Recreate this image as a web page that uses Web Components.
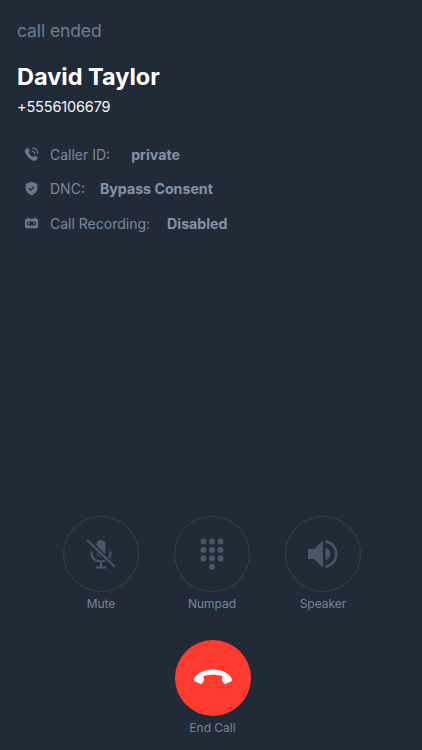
<!DOCTYPE html>
<html>
<head>
<meta charset="utf-8">
<title>Call</title>
<style>
  html, body { margin: 0; height: 100%; background: #212b38; }
  body { font-family: Inter, "Liberation Sans", sans-serif; }
</style>
</head>
<body>
<call-screen>
  <call-header slot="header" status="call ended" name="David Taylor" phone="+5556106679"></call-header>

  <call-info slot="info" label="Caller ID:" value="private" style="--value-gap: 21px">
    <svg viewBox="0 0 16 16" width="15" height="15"><path fill="currentColor" d="M1.200 3.100 3.300 1c.4-.4 1-.3 1.300.2l1.300 2.200c.2.400.2.800-.1 1.100L4.900 5.400c.7 2.400 2.600 4.400 5 5.300l.9-.9c.3-.3.800-.4 1.200-.1l2.200 1.300c.5.300.6 1 .2 1.400l-1.700 1.800c-.7.700-1.700.8-2.600.5C5.500 12.500 2.800 9.400 1 5.500.7 4.700.7 3.700 1.200 3.100Z"/><path fill="none" stroke="currentColor" stroke-width="1.300" stroke-linecap="round" d="M9 4.300c1.500.2 2.500 1.200 2.800 2.700M9.300 1.200c3 .2 5 2.300 5.400 5.300"/></svg>
  </call-info>
  <call-info slot="info" label="DNC:" value="Bypass Consent" style="--value-gap: 15px">
    <svg viewBox="0 0 16 16" width="15" height="15"><path fill="currentColor" d="M8 .8 14.200 3v4.500c0 3.700-2.600 6.400-6.200 7.700-3.600-1.300-6.200-4-6.200-7.700V3Z"/><path fill="none" stroke="#212b38" stroke-width="1.400" stroke-linecap="round" stroke-linejoin="round" d="m5.500 8 1.800 1.700 3.200-3.300"/></svg>
  </call-info>
  <call-info slot="info" label="Call Recording:" value="Disabled" style="--value-gap: 17px">
    <svg viewBox="0 0 16 16" width="15" height="15"><path fill="currentColor" fill-rule="evenodd" d="M2.500 3H4V1.500h1.500V3h5V1.500H12V3h1.500c.8 0 1.500.7 1.500 1.500v7c0 .8-.7 1.500-1.500 1.500h-11C1.700 13 1 12.300 1 11.500v-7C1 3.700 1.700 3 2.500 3ZM5 5.800a2.200 2.200 0 1 0 0 4.400h6a2.200 2.200 0 1 0 0-4.400Z"/><circle cx="5" cy="8" r="1.100" fill="currentColor"/><circle cx="11" cy="8" r="1.100" fill="currentColor"/></svg>
  </call-info>

  <call-button slot="controls" label="Mute">
    <svg viewBox="0 0 32 32" width="32" height="32">
      <rect x="11.500" y="2" width="9" height="17" rx="4.500" fill="currentColor"/>
      <path fill="none" stroke="currentColor" stroke-width="2" d="M6.500 13.500v1.500c0 5 4 8.500 9.500 8.500s9.500-3.500 9.500-8.500v-1.500M16 23.500V29M11 29.500h10"/>
      <path stroke="#212b38" stroke-width="5" d="M3 3 29 28"/>
      <path stroke="currentColor" stroke-width="2.200" stroke-linecap="round" d="M3 3 29 28"/>
    </svg>
  </call-button>
  <call-button slot="controls" label="Numpad">
    <svg viewBox="0 0 32 32" width="32" height="32" fill="currentColor">
      <circle cx="7.500" cy="3.500" r="2.900"/><circle cx="16" cy="3.500" r="2.900"/><circle cx="24.500" cy="3.500" r="2.900"/>
      <circle cx="7.500" cy="12" r="2.900"/><circle cx="16" cy="12" r="2.900"/><circle cx="24.500" cy="12" r="2.900"/>
      <circle cx="7.500" cy="20.500" r="2.900"/><circle cx="16" cy="20.500" r="2.900"/><circle cx="24.500" cy="20.500" r="2.900"/>
      <circle cx="16" cy="29" r="2.900"/>
    </svg>
  </call-button>
  <call-button slot="controls" label="Speaker">
    <svg viewBox="0 0 32 32" width="32" height="32" fill="currentColor">
      <path d="M1 11h6l9-8.500v27L7 21H1Z"/>
      <path d="M18.500 9.500c3.200 1.300 4.700 3.700 4.700 6.500s-1.500 5.200-4.700 6.500Z"/>
      <path d="M18.500 2c7.500 1.500 12 7 12 14s-4.500 12.500-12 14v-2.500c5.800-1.500 9.500-6 9.500-11.500S24.300 6 18.500 4.500Z"/>
    </svg>
  </call-button>

  <call-button slot="end" label="End Call" danger>
    <svg viewBox="0 0 40 40" width="40" height="40" fill="#fff">
      <path d="M1 21c-.4 1.200.1 2 1 2.500l5.200 2.300c.9.400 1.700.1 2.100-.7l1.600-2.700c.4-.7.400-1.200.1-1.900l-.6-2.200c5.300-2 13.900-2 19.200 0l-.6 2.200c-.3.700-.3 1.200.1 1.900l1.600 2.700c.4.800 1.200 1.100 2.100.7l5.200-2.300c.9-.5 1.400-1.300 1-2.500C36 15 28.500 11.500 20 11.500S4 15 1 21Z"/>
    </svg>
  </call-button>
</call-screen>

<script>
customElements.define(
  "call-screen",
  class extends HTMLElement {
    constructor() {
      super();
      const template = document.createElement("template");
      template.innerHTML = `
        <style>
          :host {
            display: flex;
            flex-direction: column;
            box-sizing: border-box;
            height: 750px;
            padding: 20px 0 15px;
            color: #fff;
          }
          .info {
            display: flex;
            flex-direction: column;
            gap: 16.5px;
            margin-top: 29.5px;
            padding-left: 24px;
          }
          .controls {
            display: flex;
            justify-content: center;
            gap: 35px;
            margin-top: auto;
            padding-left: 2px;
          }
          .end {
            display: flex;
            justify-content: center;
            margin-top: 29px;
            padding-left: 3px;
          }
        </style>
        <slot name="header"></slot>
        <div class="info"><slot name="info"></slot></div>
        <div class="controls"><slot name="controls"></slot></div>
        <div class="end"><slot name="end"></slot></div>
      `;
      this.attachShadow({ mode: "open" });
      this.shadowRoot.appendChild(template.content.cloneNode(true));
    }
  }
);

customElements.define(
  "call-header",
  class extends HTMLElement {
    constructor() {
      super();
      const template = document.createElement("template");
      template.innerHTML = `
        <style>
          :host { display: block; padding-left: 17px; }
          .status { color: #6d7b8f; font-size: 17.5px; letter-spacing: -0.1px; line-height: 22px; }
          .name { color: #fff; font-size: 23.5px; font-weight: 700; line-height: 30px; margin-top: 20px; }
          .phone { color: #f4f5f7; font-size: 14.5px; letter-spacing: -0.15px; line-height: 18px; margin-top: 5.5px; }
        </style>
        <div class="status"></div>
        <div class="name"></div>
        <div class="phone"></div>
      `;
      this.attachShadow({ mode: "open" });
      this.shadowRoot.appendChild(template.content.cloneNode(true));
    }

    connectedCallback() {
      const _this = this.shadowRoot;
      _this.querySelector(".status").textContent = this.getAttribute("status");
      _this.querySelector(".name").textContent = this.getAttribute("name");
      _this.querySelector(".phone").textContent = this.getAttribute("phone");
    }
  }
);

customElements.define(
  "call-info",
  class extends HTMLElement {
    constructor() {
      super();
      const template = document.createElement("template");
      template.innerHTML = `
        <style>
          :host {
            display: flex;
            align-items: center;
            height: 18px;
            font-size: 14px;
            color: #69778a;
          }
          .icon { display: flex; width: 15px; margin-right: 11px; }
          .label { margin-right: var(--value-gap, 21px); color: #7a889b; }
          .value { font-size: 14.2px; font-weight: 700; color: #8492a6; }
        </style>
        <span class="icon"><slot></slot></span>
        <span class="label"></span>
        <span class="value"></span>
      `;
      this.attachShadow({ mode: "open" });
      this.shadowRoot.appendChild(template.content.cloneNode(true));
    }

    connectedCallback() {
      const _this = this.shadowRoot;
      _this.querySelector(".label").textContent = this.getAttribute("label");
      _this.querySelector(".value").textContent = this.getAttribute("value");
    }
  }
);

customElements.define(
  "call-button",
  class extends HTMLElement {
    constructor() {
      super();
      const template = document.createElement("template");
      template.innerHTML = `
        <style>
          :host {
            display: flex;
            flex-direction: column;
            align-items: center;
            width: 76px;
            color: #4b5563;
          }
          .circle {
            display: flex;
            align-items: center;
            justify-content: center;
            box-sizing: border-box;
            width: 76px;
            height: 76px;
            border: 1px solid #363f4c;
            border-radius: 50%;
          }
          :host([danger]) .circle { background: #ff3b30; border: 0; }
          .label {
            margin-top: 4px;
            font-size: 12px;
            line-height: 15px;
            color: #76849a;
            white-space: nowrap;
          }
        </style>
        <div class="circle"><slot></slot></div>
        <div class="label"></div>
      `;
      this.attachShadow({ mode: "open" });
      this.shadowRoot.appendChild(template.content.cloneNode(true));
    }

    connectedCallback() {
      this.shadowRoot.querySelector(".label").textContent = this.getAttribute("label");
    }
  }
);
</script>
</body>
</html>
